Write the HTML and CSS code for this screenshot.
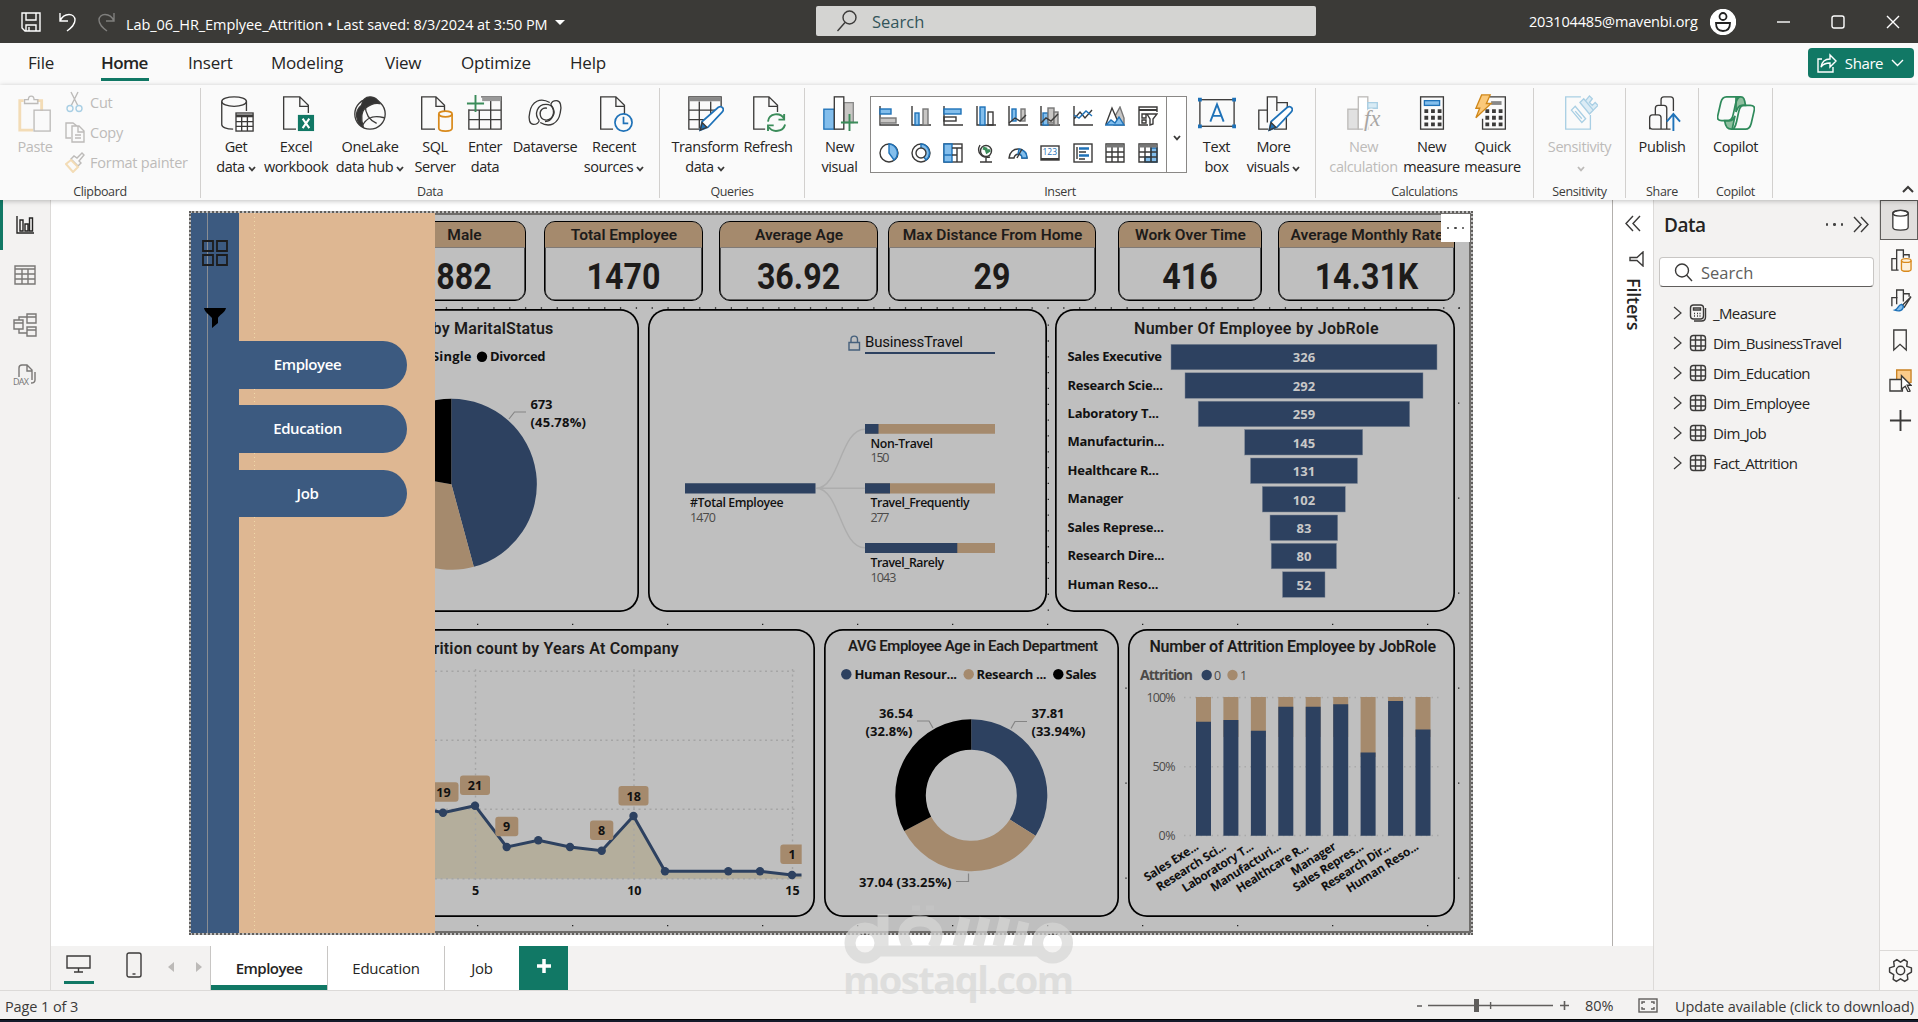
FILE: index.html
```html
<!DOCTYPE html>
<html lang="en">
<head>
    <meta charset="UTF-8">
    <meta name="viewport" content="width=device-width, initial-scale=1.0">
    <title>Lab_06_HR_Emplyee_Attrition</title>
    <link rel="stylesheet" href="styles.css">
</head>
<body>

    <svg class="defs" width="0" height="0">
        <symbol id="table" viewBox="0 0 18 18"><rect x="1.5" y="1.5" width="15" height="15" rx="3"/><path d="M1.5 6h15M1.5 12h15M6.5 1.5v15M12 1.5v15"/></symbol>
        <symbol id="chev" viewBox="0 0 8 6"><path d="M1 1l3 3.4L7 1"/></symbol>
    </svg>

    <!-- title bar -->
    <header class="titlebar">
        <div class="title-left">
            <svg class="tb-icon" viewBox="0 0 20 20"><path d="M1 1h18v18H4l-3-3zM5 1v7h10V1M5 19v-6h10v6M8 15v4"/></svg>
            <svg class="tb-icon undo" viewBox="0 0 20 20"><path d="M2 1v8h8M2 9C6 0 17 1 17 8c0 5-4 8-8 11"/></svg>
            <svg class="tb-icon redo" viewBox="0 0 20 20"><path d="M18 1v8h-8M18 9C14 0 3 1 3 8c0 5 4 8 8 11"/></svg>
            <span class="doc-name">Lab_06_HR_Emplyee_Attrition • Last saved: 8/3/2024 at 3:50 PM</span>
            <span class="caret"></span>
        </div>
        <div class="title-search">
            <svg width="20" height="22" viewBox="0 0 20 22"><circle cx="12.5" cy="7.5" r="6.5"/><path d="M8 12.500l-7.500 8.500"/></svg>
            <span>Search</span>
        </div>
        <div class="title-right">
            <span class="mail">203104485@mavenbi.org</span>
            <svg width="26" height="26" viewBox="0 0 26 26"><circle cx="13" cy="13" r="12.500" fill="#fff"/><circle cx="13" cy="7.500" r="3.500" fill="none" stroke="#222" stroke-width="1.800"/><path d="M6 14h14c0 5-2 8-7 8s-7-3-7-8z" fill="none" stroke="#222" stroke-width="1.800"/></svg>
            <svg class="win min" width="14" height="14"><path d="M0 7h13"/></svg>
            <svg class="win max" width="14" height="14"><rect x="1" y="1" width="12" height="12" rx="2"/></svg>
            <svg class="win close" width="14" height="14"><path d="M1 1l12 12M13 1L1 13"/></svg>
        </div>
    </header>

    <nav class="menu">
        <a class="m-file">File</a>
        <a class="m-home active">Home</a>
        <a class="m-insert">Insert</a>
        <a class="m-model">Modeling</a>
        <a class="m-view">View</a>
        <a class="m-opt">Optimize</a>
        <a class="m-help">Help</a>
        <button class="share-btn">
            <svg width="20" height="20" viewBox="0 0 20 20"><path d="M5 6H1v13h15v-5M4 14c1-6 5-8 9-8V2l6 6-6 6v-4c-4 0-7 1-9 4z"/></svg>
            Share
            <svg width="13" height="8" viewBox="0 0 13 8"><path d="M1 1l5.500 5.500L12 1"/></svg>
        </button>
    </nav>

    <!-- ribbon -->
    <section class="ribbon">
        <div class="group g-clip">
            <div class="tools off">
                <div class="tool t-paste">
                    <svg class="ic" viewBox="0 0 40 40"><path class="o" d="M8 7H4v31h14M27 18V7h-5" stroke-width="3"/><path d="M9 10V6h4c0-5 6-5 6 0h4v4z"/><rect x="19" y="17" width="17" height="22"/></svg>
                    <span>Paste</span>
                </div>
                <div class="clip-list">
                    <div><svg width="20" height="22" viewBox="0 0 20 22"><path d="M6 1l7 14M13 1L6 15"/><circle class="b" cx="5" cy="17.500" r="3"/><circle class="b" cx="14" cy="17.500" r="3"/></svg>Cut</div>
                    <div><svg width="20" height="22" viewBox="0 0 20 22"><path d="M6 17H1V2h7l4 3M7 5h7l5 5v11H7zM13 5v6h6M10 14h6M10 17h6"/></svg>Copy</div>
                    <div><svg width="20" height="22" viewBox="0 0 20 22"><path d="M17 2l2 2-5 6 2 2-3 3-7-7 3-3 3 2z"/><path class="o" d="M6 9l7 7-5 5-7-8z" stroke-width="2"/></svg>Format painter</div>
                </div>
            </div>
            <div class="glabel">Clipboard</div>
        </div>

        <div class="group g-data">
            <div class="tools">
                <div class="tool w56">
                    <svg class="ic" viewBox="0 0 40 40"><ellipse cx="18" cy="8" rx="13" ry="5"/><path d="M5 8v24c0 3 5 5 12 5M31 8v10"/><rect x="20" y="20" width="18" height="19" fill="#fff"/><path d="M20 23h18" stroke-width="3"/><path d="M20 29h18M20 34h18M26 24v15M32 24v15"/></svg>
                    <span>Get<br>data<svg class="chev"><use href="#chev"/></svg></span>
                </div>
                <div class="tool w64">
                    <svg class="ic" viewBox="0 0 40 40"><path d="M20 37H7V3h17l9 9v8M24 3v10h9"/><rect x="22" y="22" width="17" height="17" fill="#117865" stroke="none"/><path d="M27 26l7 10M34 26l-7 10" stroke="#fff" stroke-width="2.200"/></svg>
                    <span>Excel<br>workbook</span>
                </div>
                <div class="tool w84">
                    <svg class="ic" viewBox="0 0 40 40"><circle cx="20" cy="21" r="16"/><path d="M20 3c-5 0-8 4-9 9-4 3-6 8-5 12 1 6 3 9 7 11-3-8-2-17 2-20 5-4 10-6 15-5-2-5-6-7-10-7z" fill="#333"/><path d="M15 12c0 8 4 15 12 19M12 33c5-9 12-11 23-8"/></svg>
                    <span>OneLake<br>data hub<svg class="chev"><use href="#chev"/></svg></span>
                </div>
                <div class="tool w46">
                    <svg class="ic" viewBox="0 0 40 40"><path d="M20 37H6V3h15l9 9v6M21 3v10h9"/><g class="o" stroke-width="1.800"><ellipse cx="31" cy="21" rx="7" ry="3"/><path d="M24 21v15c0 4 14 4 14 0V21"/></g></svg>
                    <span>SQL<br>Server</span>
                </div>
                <div class="tool w54">
                    <svg class="ic" viewBox="0 0 40 40"><path d="M3 16v21h34V3H16M3 17h34M3 27h34M14 17v20M26 7v30"/><path d="M17 5h20" stroke="#999" stroke-width="5"/><path d="M10 1v18M1 10h18" stroke="#3b8c5a" stroke-width="2"/></svg>
                    <span>Enter<br>data</span>
                </div>
                <div class="tool w66">
                    <svg class="ic" viewBox="0 0 40 40"><path d="M25 9C15 3 6 8 4 19c-2 8 0 13 4 13 3 0 5-1 6-4M15 30c10 6 19 1 21-10 2-8 0-13-4-13-3 0-5 1-6 4"/><path d="M14 28c-6-7-2-17 7-17 8 0 11 9 6 14-4 4-11 3-12-3-1-5 3-8 7-7"/><path d="M26 11c6 7 2 18-6 18"/></svg>
                    <span>Dataverse</span>
                </div>
                <div class="tool w72">
                    <svg class="ic" viewBox="0 0 40 40"><path d="M19 37H6V3h16l9 9v9M22 3v10h9"/><g stroke="#1f72b8" stroke-width="1.800"><circle cx="30" cy="30" r="9"/><path d="M30 24v7h5"/></g></svg>
                    <span>Recent<br>sources<svg class="chev"><use href="#chev"/></svg></span>
                </div>
            </div>
            <div class="glabel">Data</div>
        </div>

        <div class="group g-query">
            <div class="tools">
                <div class="tool w68">
                    <svg class="ic" viewBox="0 0 40 40"><path d="M15 37H3V3h34v10M3 17h28M3 27h18M14 8v28M26 8v14"/><path d="M3 5.500h34" stroke="#888" stroke-width="4"/><path d="M15 38l2-9 17-15c4-2 7 2 4 5L23 35z" fill="#fff" stroke="#1f72b8" stroke-width="1.800"/><path d="M15 38l2-8 5 5z" fill="#1f72b8"/></svg>
                    <span>Transform<br>data<svg class="chev"><use href="#chev"/></svg></span>
                </div>
                <div class="tool w58">
                    <svg class="ic" viewBox="0 0 40 40"><path d="M17 37H5V3h16l9 9v7M21 3v10h9"/><g stroke="#3b8c5a" stroke-width="2"><path d="M20 29c1-9 13-10 17-3M37 21v6h-6M38 32c-2 8-13 9-17 3M20 39v-6h6"/></g></svg>
                    <span>Refresh</span>
                </div>
            </div>
            <div class="glabel">Queries</div>
        </div>

        <div class="group g-insert">
            <div class="tools">
                <div class="tool w50">
                    <svg class="ic" viewBox="0 0 40 40"><rect x="3" y="16" width="11" height="21" fill="#83beec" stroke="#1f72b8"/><path d="M24 9h10v21H24z" fill="#c8c6c4" stroke="#888"/><rect x="14" y="3" width="10" height="34" fill="#fff"/><path d="M30 21v18M21 30h18" stroke="#3b8c5a" stroke-width="2"/></svg>
                    <span>New<br>visual</span>
                </div>
                <div class="gallery">
                    <div class="gal-grid">
                        <svg viewBox="0 0 20 20"><path d="M1 0v19h19"/><rect class="f" x="1" y="3" width="11" height="5"/><rect class="g" x="1" y="12" width="16" height="5"/></svg>
                        <svg viewBox="0 0 20 20"><path d="M1 0v19h19"/><rect class="f" x="4" y="7" width="4" height="12"/><rect class="g" x="12" y="3" width="5" height="16"/></svg>
                        <svg viewBox="0 0 20 20"><path d="M1 0v19h19"/><rect class="f" x="1" y="3" width="17" height="5"/><rect x="1" y="11" width="12" height="4"/></svg>
                        <svg viewBox="0 0 20 20"><path d="M1 0v19h19"/><rect class="f" x="4" y="1" width="5" height="18"/><rect x="12" y="6" width="5" height="13"/></svg>
                        <svg viewBox="0 0 20 20"><path d="M1 0v19h19"/><rect class="f" x="4" y="3" width="4" height="12"/><rect class="g" x="13" y="3" width="4" height="12"/><path d="M1 17l6-5 5 3 6-6"/></svg>
                        <svg viewBox="0 0 20 20"><path d="M1 0v19h19"/><rect class="f" x="3" y="7" width="5" height="12"/><rect class="g" x="8" y="2" width="6" height="15"/><rect class="g" x="14" y="6" width="4" height="13"/><path d="M1 17l5-5 5 3 7-7"/></svg>
                        <svg viewBox="0 0 20 20"><path d="M1 0v19h19M1 13l6-7 5 6 7-8"/><path class="bl" d="M1 9l5 3 7-7 6 5"/></svg>
                        <svg viewBox="0 0 20 20"><path class="g" d="M9 12l6-11 4 11v7H9z"/><path d="M1 18L7 2l7 16z" fill="#fff"/><path class="f" d="M1 19l5-5 4 3 4-6 5 8z"/></svg>
                        <svg viewBox="0 0 20 20"><path d="M19 6V1H1v18h9"/><path d="M1 4h18" stroke-width="2"/><path d="M4 8h4v4H4zM4 14h4v3H4zM9 8h10l-4 5v5l-3 1v-6z"/></svg>
                        <svg viewBox="0 0 20 20"><circle cx="10" cy="10" r="9"/><path class="f" d="M10 1a9 9 0 0 1 5 16l-5-7z"/></svg>
                        <svg viewBox="0 0 20 20"><circle cx="10" cy="10" r="9"/><path class="f" d="M10 1a9 9 0 0 1 5 16l-3-4a4 4 0 0 0-2-7z"/><circle cx="10" cy="10" r="5" fill="#fff"/></svg>
                        <svg viewBox="0 0 20 20"><rect x="1" y="1" width="18" height="18"/><path class="f" d="M1 1h8v11H1zM1 12h8v7H1z"/><path d="M9 5h10M14 5v14M9 12h5"/></svg>
                        <svg viewBox="0 0 20 20"><circle cx="10" cy="8" r="5.500"/><path d="M7 5l3 1 1 3 3-2" stroke="#3b8c5a" stroke-width="3"/><path d="M4 2c-4 7 2 14 10 12M10 15v4M4 19h12"/></svg>
                        <svg viewBox="0 0 20 20"><path d="M1 15C2 3 18 3 19 15h-5c0-5-7-5-8 0z"/><path class="f" d="M11 6c5 1 8 4 8 9h-5c0-3-2-4-4-4z"/><path d="M9 15l5-9"/></svg>
                        <svg viewBox="0 0 20 20"><rect x="1" y="3" width="18" height="14"/><path d="M1 16h18" stroke-width="2"/><text class="num" x="2.500" y="12">123</text></svg>
                        <svg viewBox="0 0 20 20"><rect x="1" y="1" width="18" height="18"/><path d="M4 4v12M6 9h7M6 16h6"/><path class="bl" d="M6 5.500h10M6 12.500h10" stroke-width="2.500"/></svg>
                        <svg viewBox="0 0 20 20"><path d="M1 1h18v18H1zM1 9h18M1 14h18M7 4v15M13 4v15"/><path d="M1 3h18" stroke-width="3" stroke="#777"/></svg>
                        <svg viewBox="0 0 20 20"><path class="f" d="M13 5h6v14h-6zM7 14h6v5H7z"/><path d="M1 1h18v18H1zM1 9h18M1 14h18M7 4v15M13 4v15"/><path d="M1 3h18" stroke-width="3" stroke="#777"/></svg>
                    </div>
                    <div class="gal-more"><svg class="chev"><use href="#chev"/></svg></div>
                </div>
                <div class="tool w50">
                    <svg class="ic" viewBox="0 0 40 40"><rect x="2" y="6" width="36" height="28"/><g fill="#1f72b8" stroke="none"><path d="M0 4h4v4H0zM36 4h4v4h-4zM0 32h4v4H0zM36 32h4v4h-4z"/></g><path d="M13 29l7-18 7 18M15.500 23h9" stroke="#1f72b8" stroke-width="2"/></svg>
                    <span>Text<br>box</span>
                </div>
                <div class="tool w64">
                    <svg class="ic" viewBox="0 0 40 40"><path d="M14 37H4V17h9M13 30V3h10v15M23 9h11v6M33 24v13H20"/><path d="M15 38l2-9 17-15c4-2 7 2 4 5L23 35z" fill="#fff" stroke="#1f72b8" stroke-width="1.800"/><path d="M15 38l2-8 5 5z" fill="#1f72b8"/></svg>
                    <span>More<br>visuals<svg class="chev"><use href="#chev"/></svg></span>
                </div>
            </div>
            <div class="glabel">Insert</div>
        </div>

        <div class="group g-calc">
            <div class="tools">
                <div class="tool w74 off">
                    <svg class="ic" viewBox="0 0 40 40"><rect x="3" y="16" width="11" height="21" fill="#e1e1e1"/><rect x="14" y="3" width="10" height="34" fill="#fff"/><path d="M24 9h10v6H24z" class="b" fill="#d8ebf5"/><text class="fx" x="20" y="34">fx</text></svg>
                    <span>New<br>calculation</span>
                </div>
                <div class="tool w62">
                    <svg class="ic" viewBox="0 0 40 40"><rect x="8" y="3" width="24" height="34"/><rect class="f" x="12" y="7" width="16" height="5"/><path d="M12 18h4m3 0h4m3 0h4M12 25h4m3 0h4m3 0h4M12 32h4m3 0h4m3 0h4" stroke-width="4"/></svg>
                    <span>New<br>measure</span>
                </div>
                <div class="tool w60">
                    <svg class="ic" viewBox="0 0 40 40"><path d="M16 3h17v34H9V26"/><path d="M18 9.500h11" stroke="#888" stroke-width="4"/><path d="M12 18h4m3 0h4m3 0h4M12 25h4m3 0h4m3 0h4M12 32h4m3 0h4m3 0h4" stroke-width="4"/><path d="M8 1h9l-4 9h5L2 25l4-10H2z" fill="#fbc97a" stroke="#d08718"/></svg>
                    <span>Quick<br>measure</span>
                </div>
            </div>
            <div class="glabel">Calculations</div>
        </div>

        <div class="group g-sens">
            <div class="tools">
                <div class="tool off sens">
                    <svg class="ic" viewBox="0 0 40 40"><g class="b"><path d="M22 3H6v34h26V22"/><path d="M12 17l4-4 11 13-4 4zM16 18l7 8" /><path d="M21 9l4-4 10 12-4 4zM27 7l4-5 3 3-3 4 3 3 3-3 3 3-5 5" fill="#dcecf5"/></g></svg>
                    <span>Sensitivity<br><svg class="chev"><use href="#chev"/></svg></span>
                </div>
            </div>
            <div class="glabel">Sensitivity</div>
        </div>

        <div class="group g-share">
            <div class="tools">
                <div class="tool w72">
                    <svg class="ic" viewBox="0 0 40 40"><path d="M7 37V25q0-3 3-3h6q3 0 3 3v12H10q-3 0-3-3M13 22v-7q0-3 3-3h6q3 0 3 3v22h-6M19 12V6q0-3 3-3h7q3 0 3 3v12M25 37h4"/><path d="M32 39V21M25 29l7-8 7 8" stroke="#1f72b8" stroke-width="2"/></svg>
                    <span>Publish</span>
                </div>
            </div>
            <div class="glabel">Share</div>
        </div>

        <div class="group g-cop">
            <div class="tools">
                <div class="tool w72">
                    <svg class="ic" viewBox="0 0 40 40"><g stroke="#2f8a5b" stroke-width="1.800"><path d="M20 3h5c3 0 4 2 5 9h-4c-3 0-4 2-6 7z" fill="#8fbf9f"/><path d="M8 28h6c2 0 3-1 5-5l-3 14h-1c-4 0-6-2-7-9z" fill="#8fbf9f"/><path d="M10 3h14c-5 1-5 14-8 22-1 2-2 3-4 3H5c-4 0-5-2-4-6L4 9c1-4 3-6 6-6z"/><path d="M30 37H16c5-1 5-14 8-22 1-2 2-3 4-3h7c4 0 5 2 4 6l-3 13c-1 4-3 6-6 6z"/></g></svg>
                    <span>Copilot</span>
                </div>
            </div>
            <div class="glabel">Copilot</div>
        </div>
        <svg class="collapse" width="12" height="8" viewBox="0 0 12 8"><path d="M1 7l5-5 5 5"/></svg>
    </section>

    <main class="workspace">
        <aside class="view-rail">
            <div class="on"><svg width="18" height="18" viewBox="0 0 18 18"><path d="M1 0v17h17M4 4h3v11H4zM9 8h3v7H9zM13.500 2h3v13h-3z"/></svg></div>
            <div><svg width="22" height="20" viewBox="0 0 22 20"><path d="M1 1h20v18H1zM1 4h20M1 9h20M1 14h20M8 4v15M14 4v15"/></svg></div>
            <div><svg width="24" height="24" viewBox="0 0 24 24"><path d="M1 7h9v9H1zM1 10h9M14 1h9v9h-9zM14 4h9M14 14h9v9h-9zM14 17h9M6 7V4h8M6 16v4h8"/></svg></div>
            <div><svg width="24" height="22" viewBox="0 0 24 22"><path d="M6 13V4q0-3 3-3h5l5 5v10M14 1v6h5M22 8v8q0 3-4 3"/><text x="0" y="20.500" textLength="16">DAX</text></svg></div>
        </aside>

        <div class="center">
            <div class="stage">
                <div class="canvas-wrap">
                    <div class="report">
                        <svg class="dots" viewBox="191 213 1280 720">
                            <path d="M445.800 308H1460M1048.300 324.500V612" stroke-dasharray="1.300 14.530"/>
                            <path d="M477 624.300H1456M477 925.700H1456M1458.700 307.500V600M1126 687.500V900M1458.700 687.500V900" stroke-dasharray="1.300 93.700"/>
                        </svg>

                        <div class="cards">
                            <div class="card c1"><h4>Male</h4><b>882</b></div>
                            <div class="card c2"><h4>Total Employee</h4><b>1470</b></div>
                            <div class="card c3"><h4>Average Age</h4><b>36.92</b></div>
                            <div class="card c4"><h4>Max Distance From Home</h4><b>29</b></div>
                            <div class="card c5"><h4>Work Over Time</h4><b>416</b></div>
                            <div class="card c6"><h4>Average Monthly Rate</h4><b>14.31K</b></div>
                        </div>

                        <div class="row row-mid">
                            <div class="panel p-marital">
                                <svg viewBox="249 309 390 303">
                                    <text class="ttl wide" x="553.500" y="333.500" text-anchor="end">Number Of Employee by MaritalStatus</text>
                                    <text class="lbl" x="432" y="361" textLength="39.500">Single</text>
                                    <circle cx="482" cy="356.700" r="5.200"/>
                                    <text class="lbl" x="490" y="361" textLength="55.500">Divorced</text>
                                    <path fill="#2d4160" d="M451.400 484.300V398.800A85.500 85.500 0 0 1 473.800 566.800z"/>
                                    <path fill="#a58a6d" d="M451.400 484.300L473.800 566.800A85.500 85.500 0 0 1 367.200 469.600z"/>
                                    <path d="M451.400 484.300L367.200 469.600A85.500 85.500 0 0 1 451.400 398.800z"/>
                                    <path class="lead" d="M509 419l5.500-7H526"/>
                                    <text class="lbl" x="530.500" y="409" textLength="22">673</text>
                                    <text class="lbl" x="530.500" y="427" textLength="55.500">(45.78%)</text>
                                </svg>
                            </div>

                            <div class="panel p-travel">
                                <svg viewBox="648 309 399 303">
                                    <path d="M849 342.500h10.500v7.500H849zM851 342.500v-3c0-4.500 6.500-4.500 6.500 0v3" fill="none" stroke="#46607c"/>
                                    <text class="din" x="865" y="347" textLength="98">BusinessTravel</text>
                                    <path d="M865 353h130" stroke="#2d4160" stroke-width="2"/>
                                    <path d="M816 488.300c24 0 24-59 49-59M816 488.300h49M816 488.300c24 0 24 59.500 49 59.500" fill="none" stroke="#adadad"/>
                                    <g fill="#a58a6d"><path d="M865 424h130v9.700H865zM865 483.200h130v10.200H865zM865 543h130v10H865z"/></g>
                                    <g fill="#2d4160"><path d="M685 483.200h130.500v10.200H685zM865 424h13.500v9.700H865zM865 483.200h25v10.200h-25zM865 543h92.300v10H865z"/></g>
                                    <g class="node">
                                        <text x="690" y="507" textLength="93.500">#Total Employee</text>
                                        <text x="870.500" y="448" textLength="62.500">Non-Travel</text>
                                        <text x="870.500" y="507" textLength="99">Travel_Frequently</text>
                                        <text x="870.500" y="567" textLength="73.500">Travel_Rarely</text>
                                    </g>
                                    <g class="val">
                                        <text x="690" y="521.500" textLength="26">1470</text>
                                        <text x="870.500" y="461.500" textLength="19">150</text>
                                        <text x="870.500" y="521.500" textLength="19">277</text>
                                        <text x="870.500" y="581.500" textLength="26">1043</text>
                                    </g>
                                </svg>
                            </div>

                            <div class="panel p-funnel">
                                <svg viewBox="1055 309 400 303">
                                    <text class="ttl" x="1134" y="333.500" textLength="244.500">Number Of Employee by JobRole</text>
                                    <g class="lbl">
                                        <text x="1067.500" y="361" textLength="94.500">Sales Executive</text>
                                        <text x="1067.500" y="389.600" textLength="95.500">Research Scie...</text>
                                        <text x="1067.500" y="418" textLength="91.500">Laboratory T...</text>
                                        <text x="1067.500" y="446.200" textLength="97">Manufacturin...</text>
                                        <text x="1067.500" y="475" textLength="91.500">Healthcare R...</text>
                                        <text x="1067.500" y="503.200" textLength="56">Manager</text>
                                        <text x="1067.500" y="532" textLength="96.500">Sales Represe...</text>
                                        <text x="1067.500" y="560.200" textLength="97">Research Dire...</text>
                                        <text x="1067.500" y="589" textLength="91">Human Reso...</text>
                                    </g>
                                    <g fill="#2d4160" stroke="#7c8593" stroke-width=".5">
                                        <rect x="1171" y="344.300" width="266" height="25.500"/>
                                        <rect x="1185" y="372.800" width="238" height="25.500"/>
                                        <rect x="1198.200" y="401.200" width="211.500" height="25.500"/>
                                        <rect x="1244.700" y="429.500" width="118" height="25.500"/>
                                        <rect x="1250.500" y="458" width="107" height="25.500"/>
                                        <rect x="1262.300" y="486.500" width="83" height="25.500"/>
                                        <rect x="1270" y="515" width="67.700" height="25.500"/>
                                        <rect x="1271.200" y="543.300" width="65.300" height="25.500"/>
                                        <rect x="1282.500" y="571.800" width="42.500" height="25.500"/>
                                    </g>
                                    <g class="fval">
                                        <text x="1304" y="362">326</text>
                                        <text x="1304" y="391">292</text>
                                        <text x="1304" y="419">259</text>
                                        <text x="1304" y="448">145</text>
                                        <text x="1304" y="476">131</text>
                                        <text x="1304" y="505">102</text>
                                        <text x="1304" y="533">83</text>
                                        <text x="1304" y="561">80</text>
                                        <text x="1304" y="590">52</text>
                                    </g>
                                </svg>
                            </div>
                        </div>

                        <div class="row row-low">
                            <div class="panel p-years">
                                <svg viewBox="249 629 566 288">
                                    <text class="ttl wide" x="679" y="653.500" text-anchor="end">Attrition count by Years At Company</text>
                                    <path d="M435 811l8 1.700 32-7 31.700 41.300 31.600-6.700L570 847l31.700 3.700 31.800-34.700L665 871.300h95l32 3.700h9.500v3.700H435z" fill="#b4ae9c"/>
                                    <path d="M435 671.300H798M435 740.300H798M435 809.300H798M435 878.700H798M475.500 669V880M634 669V880M792.500 669V880" fill="none" stroke="#a5a5a5" stroke-dasharray="2 3.500"/>
                                    <path d="M435 811l8 1.700 32-7 31.700 41.300 31.600-6.700L570 847l31.700 3.700 31.800-34.700L665 871.300h95l32 3.700h9.500" fill="none" stroke="#2d4160" stroke-width="3"/>
                                    <g fill="#2d4160"><circle cx="443" cy="812.700" r="4.200"/><circle cx="475" cy="805.700" r="4.200"/><circle cx="506.700" cy="847" r="4.200"/><circle cx="538.300" cy="840.300" r="4.200"/><circle cx="570" cy="847" r="4.200"/><circle cx="601.700" cy="850.700" r="4.200"/><circle cx="633.500" cy="816" r="4.200"/><circle cx="665" cy="871.300" r="4.200"/><circle cx="728.300" cy="871.300" r="4.200"/><circle cx="760" cy="871.300" r="4.200"/><circle cx="792" cy="875" r="4.200"/></g>
                                    <g fill="#a58a6d">
                                        <rect x="428" y="782.300" width="30.500" height="19.500" rx="3"/><rect x="460" y="775.500" width="30" height="19.500" rx="3"/>
                                        <rect x="495.300" y="816.700" width="23" height="19.500" rx="3"/><rect x="590" y="820.500" width="23.300" height="19.500" rx="3"/>
                                        <rect x="618.500" y="786" width="30" height="19.500" rx="3"/><path d="M783.300 844.600h18.400v19.500h-18.400q-3 0-3-3v-13.500q0-3 3-3z"/>
                                    </g>
                                    <g class="ax">
                                        <text x="443.500" y="796.500">19</text><text x="475" y="789.700">21</text><text x="506.700" y="831">9</text>
                                        <text x="601.700" y="834.700">8</text><text x="633.700" y="800.500">18</text><text x="792" y="859.300">1</text>
                                        <text x="475.700" y="895">5</text><text x="634.300" y="895">10</text><text x="792.500" y="895">15</text>
                                    </g>
                                </svg>
                            </div>

                            <div class="panel p-age">
                                <svg viewBox="824 629 295 288">
                                    <text class="ttl sm" x="848" y="651.300" textLength="250">AVG Employee Age in Each Department</text>
                                    <circle cx="846.300" cy="674.300" r="5.200" fill="#2d4160"/>
                                    <circle cx="968.700" cy="674.300" r="5.200" fill="#a58a6d"/>
                                    <circle cx="1058.300" cy="674.300" r="5.200"/>
                                    <g class="lbl">
                                        <text x="854.500" y="679" textLength="102.500">Human Resour...</text>
                                        <text x="976.500" y="679" textLength="70">Research ...</text>
                                        <text x="1065.500" y="679" textLength="31">Sales</text>
                                        <text x="879" y="718" textLength="34">36.54</text>
                                        <text x="865.500" y="735.500" textLength="47">(32.8%)</text>
                                        <text x="1031.500" y="718" textLength="33">37.81</text>
                                        <text x="1031.500" y="736" textLength="54">(33.94%)</text>
                                        <text x="859" y="887" textLength="92.500">37.04 (33.25%)</text>
                                    </g>
                                    <g fill="none" stroke-width="30.500">
                                        <path stroke="#2d4160" d="M971.300 734.500A60.800 60.800 0 0 1 1022.700 827.700"/>
                                        <path stroke="#a58a6d" d="M1022.700 827.700A60.800 60.800 0 0 1 917.700 823.900"/>
                                        <path stroke="#000" d="M917.700 823.900A60.800 60.800 0 0 1 971.300 734.500"/>
                                    </g>
                                    <path class="lead" d="M917 721h12l4 7M1027 721.500h-12l-4 7M956 881.500h12.500v-8"/>
                                </svg>
                            </div>

                            <div class="panel p-attr">
                                <svg viewBox="1128 629 327 288">
                                    <text class="ttl" x="1149.500" y="652.300" textLength="286.500">Number of Attrition Employee by JobRole</text>
                                    <text class="lbl dim" x="1140" y="680.300" textLength="53">Attrition</text>
                                    <circle cx="1206.700" cy="675" r="5.200" fill="#2d4160"/>
                                    <circle cx="1232.500" cy="675" r="5.200" fill="#a58a6d"/>
                                    <g class="val">
                                        <text x="1214" y="680.300">0</text><text x="1240" y="680.300">1</text>
                                        <text x="1146.500" y="702" textLength="29">100%</text>
                                        <text x="1152.500" y="771.300" textLength="23">50%</text>
                                        <text x="1158.500" y="840.300" textLength="17">0%</text>
                                    </g>
                                    <path d="M1184 697.500h257M1184 766.800h257M1184 835.600h257" stroke="#a9a9a9" stroke-width="1.500" stroke-dasharray="1.500 4"/>
                                    <g fill="#a58a6d"><path d="M1196 697h15v40h-15zM1223.400 697h15v40h-15zM1250.900 697h15v40h-15zM1278.300 697h15v40h-15zM1305.700 697h15v40h-15zM1333.200 697h15v40h-15zM1360.600 697h15v60h-15zM1388.100 697h15v40h-15zM1415.500 697h15v40h-15z"/></g>
                                    <g fill="#2d4160"><path d="M1196 721.700h15v114h-15zM1223.400 720h15v115.700h-15zM1250.900 730.700h15v105h-15zM1278.300 706.800h15v128.900h-15zM1305.700 706.800h15v128.900h-15zM1333.200 704.300h15v131.400h-15zM1360.600 752.400h15v83.300h-15zM1388.100 701h15v134.700h-15zM1415.500 729.500h15v106.200h-15z"/></g>
                                    <g class="slant">
                                        <text transform="translate(1199.500 848.500) rotate(-32.500)" textLength="62">Sales Exe...</text>
                                        <text transform="translate(1227 848.500) rotate(-32.500)" textLength="80">Research Sci...</text>
                                        <text transform="translate(1254.500 848.500) rotate(-32.500)" textLength="82">Laboratory T...</text>
                                        <text transform="translate(1282 848.500) rotate(-32.500)" textLength="81">Manufacturi...</text>
                                        <text transform="translate(1309.500 848.500) rotate(-32.500)" textLength="83">Healthcare R...</text>
                                        <text transform="translate(1337 848.500) rotate(-32.500)" textLength="51">Manager</text>
                                        <text transform="translate(1364.500 848.500) rotate(-32.500)" textLength="81">Sales Repres...</text>
                                        <text transform="translate(1392 848.500) rotate(-32.500)" textLength="80">Research Dir...</text>
                                        <text transform="translate(1419.500 848.500) rotate(-32.500)" textLength="83">Human Reso...</text>
                                    </g>
                                </svg>
                            </div>
                        </div>

                        <!-- slide-out page navigator -->
                        <div class="drawer">
                            <div class="drawer-rail">
                                <svg class="grid-ic" width="26" height="26" viewBox="0 0 26 26"><path d="M1 1h10v10H1zM15 1h10v10H15zM1 15h10v10H1zM15 15h10v10H15z"/></svg>
                                <svg width="24" height="20" viewBox="0 0 24 20"><path d="M1 0h22c-1 5-7 7-8 10v5l-6 5V10C7 7 2 5 1 0z" fill="#000"/></svg>
                            </div>
                            <div class="drawer-links">
                                <a>Employee</a>
                                <a>Education</a>
                                <a>Job</a>
                            </div>
                        </div>
                        <div class="more-dots"><i></i><i></i><i></i></div>
                    </div>
                </div>
                <div class="filters">
                    <svg width="17" height="17" viewBox="0 0 17 17"><path d="M8 1L1 8.500 8 16M15 1L8 8.500 15 16"/></svg>
                    <svg class="funnel" width="16" height="16" viewBox="0 0 16 16"><path d="M15 1v14L9 9.500H2v-3h7z"/></svg>
                    <span>Filters</span>
                </div>
            </div>

            <div class="page-tabs">
                <div class="devices">
                    <div class="dev on"><svg width="26" height="20" viewBox="0 0 26 20"><path d="M1 2h23v12H1zM12.500 14v4M8 18h9"/></svg></div>
                    <svg class="phone" width="16" height="26" viewBox="0 0 16 26"><rect x="1" y="1" width="14" height="24" rx="2"/><path d="M6.500 22h3"/></svg>
                    <span class="arr l"></span>
                    <span class="arr r"></span>
                </div>
                <div class="tab t1 on">Employee</div>
                <div class="tab t2">Education</div>
                <div class="tab t3">Job</div>
                <div class="add"><svg width="14" height="14" viewBox="0 0 14 14"><path d="M7 0v14M0 7h14"/></svg></div>
            </div>
        </div>

        <aside class="data-pane">
            <div class="data-head">
                <h2>Data</h2>
                <div class="hd-dots"><i></i><i></i><i></i></div>
                <svg width="17" height="17" viewBox="0 0 17 17"><path d="M1 1l7 7.500L1 16M8 1l7 7.500L8 16"/></svg>
            </div>
            <div class="data-search"><svg width="19" height="19" viewBox="0 0 19 19"><circle cx="8" cy="7.500" r="6.500"/><path d="M12.500 12l5.500 6"/></svg>Search</div>
            <ul>
                <li><svg class="exp" viewBox="0 0 9 14"><path d="M1 1l7 6-7 6"/></svg><svg class="ti" viewBox="0 0 18 18"><rect x="1.500" y="1" width="13" height="14" rx="3"/><path d="M4.500 4h7v2h-7zM5 9.500h1m2 0h1m1.500 0h1M5 12h1m2 0h1m1.500 0h1M16.500 4v9q0 4-4 4H5"/></svg>_Measure</li>
                <li><svg class="exp" viewBox="0 0 9 14"><path d="M1 1l7 6-7 6"/></svg><svg class="ti"><use href="#table"/></svg>Dim_BusinessTravel</li>
                <li><svg class="exp" viewBox="0 0 9 14"><path d="M1 1l7 6-7 6"/></svg><svg class="ti"><use href="#table"/></svg>Dim_Education</li>
                <li><svg class="exp" viewBox="0 0 9 14"><path d="M1 1l7 6-7 6"/></svg><svg class="ti"><use href="#table"/></svg>Dim_Employee</li>
                <li><svg class="exp" viewBox="0 0 9 14"><path d="M1 1l7 6-7 6"/></svg><svg class="ti"><use href="#table"/></svg>Dim_Job</li>
                <li><svg class="exp" viewBox="0 0 9 14"><path d="M1 1l7 6-7 6"/></svg><svg class="ti"><use href="#table"/></svg>Fact_Attrition</li>
            </ul>
        </aside>

        <aside class="pane-rail">
            <div class="on"><svg viewBox="0 0 24 24"><ellipse cx="12" cy="4.500" rx="8" ry="3" fill="#fff"/><path d="M4 4.500V19c0 4 16 4 16 0V4.500" fill="#fff"/><ellipse cx="12" cy="4.500" rx="8" ry="3"/></svg></div>
            <div><svg viewBox="0 0 24 24"><path d="M10 22H3V10h5M8 22V1h7v8M15 6h6v3"/><g stroke="#d98a1c" fill="#fdf1dd"><path d="M13 12v9c0 3 10 3 10 0v-9"/><ellipse cx="18" cy="12" rx="5" ry="2"/></g></svg></div>
            <div><svg viewBox="0 0 24 24"><path d="M3 18V9h6M8 16V1h7v12M15 5h6v3"/><path d="M23 8l-9 9 2 2z" fill="#fff"/><path d="M13 16c-4 1-3 5-7 6 5 2 9 0 9-4z" fill="#83beec" stroke="#1f72b8"/></svg></div>
            <div><svg viewBox="0 0 24 24"><path d="M5 1h13v21l-6.500-6L5 22z"/></svg></div>
            <div><svg viewBox="0 0 24 24"><path d="M8 1h15v13H8z" fill="#fbcb8a" stroke="#c98325"/><path d="M1 11h13v12H1z" fill="#faf9f8"/><path d="M13 7v14l4-3 3 6 2-1-3-6h4z" fill="#fff"/></svg></div>
            <div><svg viewBox="0 0 24 24"><path d="M12 1v22M1 12h22" stroke-width="2"/></svg></div>
            <div class="gear"><svg viewBox="0 0 24 24"><circle cx="12" cy="12" r="4"/><path d="M8.500 1.500L12 4l3.500-2.500 3 2L18 8l4.500 1.500v4L18.500 16l.5 4.500-3 2-4-2.500-4 2.500-3-2L5.500 16l-4-2.500v-4L6 8l-.5-4.500z" stroke-linejoin="round"/></svg></div>
        </aside>
    </main>

    <footer class="status">
        <span class="page-no">Page 1 of 3</span>
        <svg class="zoom" width="156" height="20" viewBox="1414 995 156 20"><path d="M1416 1006h5M1559 1005.500h9M1563.500 1001v9" stroke-width="1.600"/><path d="M1427 1005.500h125M1489.600 1002v7"/><path d="M1475.500 999v13" stroke-width="5"/></svg>
        <span class="pct">80%</span>
        <svg class="fit" width="20" height="15" viewBox="0 0 20 15"><rect x="1" y="1" width="18" height="13"/><path d="M7 4H4v2M13 4h3v2M7 11H4V9M13 11h3V9"/></svg>
        <span class="update">Update available (click to download)</span>
    </footer>
    <div class="desk-edge"></div>

    <svg class="watermark" width="240" height="110" viewBox="840 900 240 110">
        <g fill="none" stroke-width="11">
            <circle cx="865" cy="943" r="15"/>
            <path d="M883 914v36M878 951H1040"/>
            <path d="M908 947c-10-18 0-26 12-26s23 8 13 26"/>
            <path d="M958 946l7-28M978 946l7-28M998 946l7-28M1018 946l6-24"/>
            <circle cx="1052.500" cy="943" r="15"/>
        </g>
        <path d="M912 908h8M926 908h8" stroke-width="5" opacity=".3"/>
        <text x="843" y="993.500" textLength="231">mostaql.com</text>
    </svg>

</body>
</html>
```
FILE: styles.css
```css
* {
    box-sizing: border-box;
}
body {
    margin: 0;
    width: 1918px;
    height: 1022px;
    overflow: hidden;
    background: #fff;
    font-family: "Open Sans", "Noto Sans", sans-serif;
    font-stretch: 92%;
    font-size: 15px;
    color: #252423;
    display: flex;
    flex-direction: column;
    position: relative;
}
svg {
    fill: none;
    stroke: #3b3a39;
    stroke-width: 1.4;
    flex: none;
}
svg text {
    stroke: none;
    fill: #111;
}
.defs {
    position: absolute;
}
h2, h4, ul {
    margin: 0;
    padding: 0;
}

/* title bar */
.titlebar {
    height: 43px;
    background: #3b3a37;
    color: #fff;
    display: grid;
    grid-template-columns: 816px 500px 1fr;
    flex: none;
}
.titlebar svg {
    stroke: #fff;
}
.title-left {
    display: flex;
    align-items: center;
    padding-left: 21px;
}
.tb-icon {
    width: 20px;
    height: 20px;
}
.undo {
    margin-left: 17px;
}
.redo {
    margin: 0 10px 0 18px;
    opacity: .35;
}
.doc-name {
    margin-top: 6px;
    width: 422px;
    white-space: nowrap;
    font-size: 14.5px;
    letter-spacing: -.07px;
}
.caret {
    margin: 2px 0 0 7px;
    border: 5px solid transparent;
    border-top-color: #fff;
    border-bottom: 0;
}
.title-search {
    margin-top: 6px;
    height: 30px;
    border-radius: 2px;
    background: #d4d4d2;
    color: #33555a;
    display: flex;
    align-items: center;
    gap: 15px;
    padding-left: 21px;
    font-size: 16.5px;
}
.title-search svg {
    stroke: #3b3a39;
}
.title-right {
    display: flex;
    align-items: center;
    padding-left: 213px;
}
.mail {
    width: 181px;
    font-size: 14.5px;
    letter-spacing: -.17px;
}
.min { margin-left: 41px; }
.max { margin-left: 40px; }
.close { margin-left: 41px; }

/* menu tabs */
.menu {
    height: 42px;
    background: #fafafa;
    display: flex;
    align-items: flex-start;
    padding-left: 28px;
    font-size: 17px;
    letter-spacing: -.2px;
    flex: none;
}
.menu a {
    height: 38px;
    line-height: 39px;
    white-space: nowrap;
}
.m-file { width: 73px; }
.m-home { width: 48px; margin-right: 39px; }
.m-insert { width: 83px; }
.m-model { width: 114px; }
.m-view { width: 76px; }
.m-opt { width: 109px; }
.menu .active {
    font-weight: 600;
    letter-spacing: -.6px;
    border-bottom: 3px solid #117865;
}
.share-btn {
    width: 106px;
    height: 30px;
    margin: 5px 4px 0 auto;
    border: 0;
    border-radius: 4px;
    background: #117865;
    color: #fff;
    font: 15px "Open Sans", sans-serif;
    letter-spacing: -.4px;
    display: flex;
    align-items: center;
    justify-content: space-between;
    padding: 0 10px 0 9px;
}
.share-btn svg {
    stroke: #fff;
}

/* ribbon */
.ribbon {
    height: 115px;
    background: #fafafa;
    display: flex;
    align-items: flex-start;
    padding-top: 3px;
    box-shadow: 0 1px 5px rgba(0, 0, 0, .25);
    position: relative;
    z-index: 2;
    flex: none;
}
.group {
    height: 110px;
    border-right: 1px solid #d2d0ce;
    display: flex;
    flex-direction: column;
}
.g-clip { width: 201px; }
.g-data { width: 459px; }
.g-query { width: 145px; }
.g-insert { width: 511px; }
.g-calc { width: 218px; }
.g-sens { width: 92px; }
.g-share { width: 73px; }
.g-cop { width: 74px; }
.tools {
    flex: 1;
    display: flex;
    justify-content: center;
    padding-top: 6px;
}
.g-clip .tools {
    justify-content: flex-start;
    padding-left: 14px;
}
.g-data .tools {
    padding-right: 2px;
}
.g-query .tools {
    padding-left: 4px;
}
.tool {
    text-align: center;
    font-size: 14.5px;
    letter-spacing: -.4px;
    line-height: 20px;
    white-space: nowrap;
    display: flex;
    flex-direction: column;
    align-items: center;
}
.tool span {
    margin-top: 5px;
}
.ic {
    width: 38px;
    height: 38px;
}
.off {
    color: #bdbbb9;
}
.off svg {
    stroke: #bdbbb9;
}
.o { stroke: #d98a1c; }
.off .o { stroke: #f3dcb6; }
.b { stroke: #a9cfe4; }
.fx {
    font: italic 24px "Liberation Serif", serif;
    letter-spacing: 0;
    fill: #a8a6a4;
    stroke: #fafafa;
    stroke-width: 3;
    paint-order: stroke;
}
.w46 { width: 46px; }
.w50 { width: 50px; }
.w54 { width: 54px; }
.w56 { width: 56px; }
.w58 { width: 58px; }
.w60 { width: 60px; }
.w62 { width: 62px; }
.w64 { width: 64px; }
.w66 { width: 66px; }
.w68 { width: 68px; }
.w72 { width: 72px; }
.w74 { width: 74px; }
.w84 { width: 84px; }
.t-paste { width: 42px; }
.chev {
    width: 8px;
    height: 6px;
    margin-left: 3px;
    stroke-width: 1.8;
}
.clip-list {
    display: flex;
    flex-direction: column;
    gap: 8px;
    margin-top: -3px;
    padding: 0 0 0 9px;
    font-size: 14.5px;
    letter-spacing: -.25px;
}
.clip-list div {
    display: flex;
    align-items: center;
    height: 22px;
    gap: 5px;
    white-space: nowrap;
}
.glabel {
    height: 19px;
    line-height: 19px;
    margin-bottom: -3px;
    text-align: center;
    font-size: 12.5px;
    letter-spacing: -.35px;
    color: #3b3a39;
}
.gallery {
    width: 317px;
    height: 77px;
    margin: 2px 5px 0;
    border: 1px solid #8a8886;
    background: #fff;
    display: flex;
}
.gal-grid {
    width: 295px;
    display: grid;
    grid-template-columns: repeat(9, 20px);
    grid-template-rows: 20px 20px;
    column-gap: 12.4px;
    row-gap: 17px;
    padding: 9px 0 0 8px;
}
.gal-grid svg {
    width: 20px;
    height: 20px;
}
.num {
    font-size: 8.5px;
    letter-spacing: 0;
    fill: #1f72b8;
}
.gal-more {
    flex: 1;
    border-left: 1px solid #8a8886;
    display: flex;
    align-items: center;
    padding-left: 3px;
}
.gal-more .chev {
    margin-top: 7px;
}
.f {
    fill: #83beec;
    stroke: #1f72b8;
}
.g {
    fill: #c8c6c4;
    stroke: #777;
}
.bl { stroke: #1f72b8; }
.collapse {
    margin: 97px 4px 0 auto;
    stroke-width: 2;
}

/* workspace */
.workspace {
    flex: 1;
    display: flex;
    min-height: 0;
}
.view-rail {
    width: 51px;
    background: #f3f2f1;
    border-right: 1px solid #dcdad8;
}
.view-rail div {
    height: 50px;
    display: flex;
    align-items: center;
    justify-content: center;
}
.view-rail svg {
    stroke: #7a7876;
}
.view-rail text {
    font-size: 9px;
    fill: #777;
}
.view-rail .on {
    border-left: 3px solid #117865;
    padding-right: 3px;
}
.view-rail .on svg {
    stroke: #252423;
}
.center {
    width: 1603px;
    display: flex;
    flex-direction: column;
}
.stage {
    height: 746px;
    display: flex;
    flex: none;
}
.canvas-wrap {
    width: 1562px;
    border-right: 1px solid #b3b0ad;
    padding: 11px 0 0 138px;
}
.report {
    width: 1284px;
    height: 724px;
    border: 2px dotted #605e5c;
    background: #bfbfbf;
    box-shadow: inset -2px -2px #6f6d6b, inset 0 2px #6f6d6b;
    position: relative;
    padding: 8px 16px 0 0;
}
.dots {
    position: absolute;
    left: 0;
    top: 0;
    width: 1280px;
    height: 720px;
}
.dots path {
    stroke: #222;
    stroke-width: 1.3;
}
.cards, .row {
    display: flex;
    justify-content: flex-end;
    position: relative;
}
.card {
    height: 80px;
    border: 1.5px solid #000;
    border-radius: 11px;
    box-shadow: inset 0 0 0 .6px #000;
    overflow: hidden;
    text-align: center;
    color: #1d1b1a;
    font-family: Roboto, sans-serif;
}
.card h4 {
    height: 26px;
    line-height: 27px;
    background: #a58a6d;
    border-bottom: 1px solid #807a76;
    font-size: 15.5px;
    font-weight: 600;
    white-space: nowrap;
    padding-left: 1px;
}
.card b {
    display: block;
    font-size: 37px;
    line-height: 57px;
    transform: scaleX(.87);
}
.c1 { width: 124px; margin-right: 18px; }
.c2 { width: 159px; margin-right: 16px; }
.c3 { width: 159px; margin-right: 10px; }
.c4 { width: 208px; margin-right: 22px; }
.c5 { width: 144px; margin-right: 16px; }
.c6 { width: 177px; }
.row-mid {
    margin-top: 8px;
}
.row-low {
    margin-top: 17px;
}
.panel {
    box-shadow: inset 0 0 0 1.7px #000;
    border-radius: 19px;
}
.panel svg {
    display: block;
    width: 100%;
    height: 100%;
    fill: #000;
    stroke: none;
}
.row-mid .panel { height: 303px; }
.row-low .panel { height: 288px; }
.p-marital { width: 390px; margin-right: 9px; }
.p-travel { width: 399px; margin-right: 8px; }
.p-funnel { width: 400px; }
.p-years { width: 566px; margin-right: 9px; }
.p-age { width: 295px; margin-right: 9px; }
.p-attr { width: 327px; }
.ttl {
    font: 600 16px Roboto, sans-serif;
    fill: #1d1b1a;
}
.ttl.wide {
    letter-spacing: .2px;
}
.ttl.sm {
    font-size: 15px;
}
.lbl, .ax text {
    font-size: 13px;
    font-weight: 700;
}
.lbl.dim {
    font-size: 14px;
    fill: #4c4a48;
}
.din {
    font: 15px Roboto, sans-serif;
}
.node text {
    font-size: 12.3px;
    font-weight: 600;
}
.val text {
    font-size: 12.5px;
    fill: #4c4a48;
}
.fval text {
    font-size: 13px;
    font-weight: 700;
    fill: #c8c8c8;
    text-anchor: middle;
}
.ax text {
    font-size: 12.5px;
    text-anchor: middle;
}
.slant text {
    font-size: 12px;
    font-weight: 700;
    text-anchor: end;
}
.panel .lead {
    fill: none;
    stroke: #858585;
    stroke-width: 1.2;
}

/* slide-out navigator, lies over the visuals */
.drawer {
    position: absolute;
    left: 0;
    top: 0;
    width: 244px;
    height: 720px;
    background: #deb792;
    display: flex;
}
.drawer-rail {
    width: 48px;
    background: linear-gradient(90deg, #3c5a80 16px, #8a8d92 16px, #8a8d92 17.5px, #3c5a80 17.5px);
    display: flex;
    flex-direction: column;
    align-items: flex-start;
    padding: 27px 0 0 11px;
    gap: 42px;
}
.grid-ic {
    stroke: #1c1c1c;
    stroke-width: 1.8;
}
.drawer-rail svg:last-child {
    margin-left: 1px;
    stroke: none;
}
.drawer-links {
    flex: 1;
    padding-top: 128px;
    background: repeating-linear-gradient(#f1d9a9 0 1px, transparent 1px 4px) 15px 0 / 1px 100% no-repeat;
}
.drawer-links a {
    display: block;
    width: 168px;
    height: 47.5px;
    margin-bottom: 16.8px;
    border-radius: 0 24px 24px 0;
    background: #3c5a80;
    color: #fff;
    font-weight: 600;
    font-size: 15px;
    letter-spacing: -.4px;
    line-height: 47px;
    text-align: center;
    padding-right: 31px;
}
.more-dots {
    position: absolute;
    right: 1px;
    top: 1px;
    width: 29px;
    height: 28px;
    background: #fff;
    display: flex;
    align-items: center;
    justify-content: center;
    gap: 5px;
}
.more-dots i, .hd-dots i {
    width: 2.5px;
    height: 2.5px;
    border-radius: 50%;
    background: #444;
}

.filters {
    width: 41px;
    border-right: 1px solid #dcdad8;
    display: flex;
    flex-direction: column;
    align-items: center;
    padding: 15px 0 0 1px;
}
.filters .funnel {
    margin: 19px 0 0 5px;
}
.filters span {
    writing-mode: vertical-rl;
    margin-top: 11px;
    font-size: 18px;
    font-weight: 600;
    line-height: 22px;
    letter-spacing: -.2px;
}
.page-tabs {
    flex: 1;
    background: #f3f2f1;
    border-right: 1px solid #dcdad8;
    display: flex;
}
.devices {
    width: 159px;
    display: flex;
    align-items: flex-start;
    padding-left: 13px;
}
.dev {
    width: 30px;
    height: 38px;
    border-bottom: 3px solid #117865;
    padding: 8px 0 0 2px;
}
.phone {
    margin: 6px 0 0 32px;
}
.arr {
    border: 5px solid transparent;
    margin-top: 16px;
}
.arr.l {
    border-right: 6px solid #bcbab8;
    border-left: 0;
    margin-left: 26px;
}
.arr.r {
    border-left: 6px solid #bcbab8;
    border-right: 0;
    margin-left: 22px;
}
.tab {
    background: #fff;
    border-left: 1px solid #c8c6c4;
    text-align: center;
    line-height: 44px;
    font-size: 15px;
    letter-spacing: -.25px;
}
.tab.on {
    box-shadow: inset 0 -5px #117865;
    font-weight: 600;
    letter-spacing: -.5px;
}
.t1 { width: 117px; }
.t2 { width: 117px; }
.t3 { width: 75px; }
.add {
    width: 49px;
    background: #117865;
    display: flex;
    align-items: center;
    justify-content: center;
    padding-bottom: 4px;
}
.add svg {
    stroke: #fff;
    stroke-width: 3.5;
}

/* data pane */
.data-pane {
    width: 225px;
    background: #f3f2f1;
}
.data-head {
    height: 57px;
    display: flex;
    align-items: center;
    padding: 0 9px 8px 10px;
}
.data-head h2 {
    flex: 1;
    font-size: 19px;
    font-weight: 600;
    letter-spacing: -.5px;
}
.hd-dots {
    display: flex;
    gap: 5px;
    margin-right: 10px;
}
.data-search {
    height: 30px;
    margin: 0 5px 0 5px;
    border: 1px solid #c8c6c4;
    border-bottom-color: #605e5c;
    border-radius: 4px;
    background: #fff;
    color: #605e5c;
    font-size: 16.5px;
    display: flex;
    align-items: center;
    gap: 8px;
    padding-left: 14px;
}
.data-pane ul {
    list-style: none;
    padding-top: 11px;
}
.data-pane li {
    height: 30px;
    display: flex;
    align-items: center;
    padding-left: 19px;
    font-size: 15px;
    letter-spacing: -.6px;
}
.exp {
    width: 9px;
    height: 14px;
    margin-right: 7px;
    stroke-width: 1.2;
}
.ti {
    width: 18px;
    height: 18px;
    margin-right: 6px;
}
.pane-rail {
    width: 39px;
    border-left: 1px solid #dcdad8;
    background: #faf9f8;
    display: flex;
    flex-direction: column;
}
.pane-rail div {
    height: 40px;
    display: flex;
    align-items: center;
    justify-content: center;
    padding-left: 2px;
}
.pane-rail .on {
    background: #e1dfdd;
    border: 1px solid #605e5c;
}
.pane-rail svg {
    width: 23px;
    height: 23px;
}
.pane-rail .gear {
    margin-top: auto;
    border-top: 1px solid #dcdad8;
}
.gear svg {
    width: 25px;
    height: 25px;
}

/* status bar */
.status {
    height: 29px;
    background: #f3f2f1;
    border-top: 1px solid #dcdad8;
    display: flex;
    align-items: center;
    padding: 3px 3px 0 5px;
    font-size: 14.5px;
    letter-spacing: -.1px;
    color: #3b3a39;
    flex: none;
}
.zoom {
    margin: -3px 14px 0 auto;
    stroke: #605e5c;
}
.pct {
    width: 53px;
    margin-top: -3px;
}
.fit {
    margin-right: 17px;
    margin-top: -2px;
    stroke: #605e5c;
}
.update {
    width: 240px;
    white-space: nowrap;
}
.desk-edge {
    height: 3px;
    background: #141a2a;
    border-top: 1px solid #000;
    flex: none;
}
.watermark {
    position: absolute;
    left: 840px;
    top: 900px;
    opacity: .7;
    stroke: #d6d6d5;
}
.watermark text {
    font: 700 38px "Open Sans", sans-serif;
    fill: #d6d6d5;
}
```
